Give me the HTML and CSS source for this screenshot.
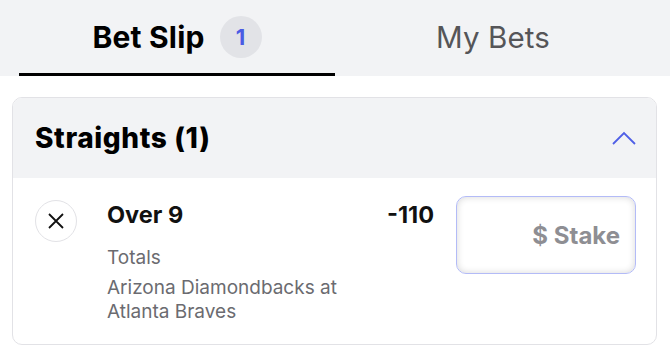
FILE: index.html
```html
<!DOCTYPE html>
<html>
<head>
<meta charset="utf-8">
<link rel="stylesheet" href="styles.css">
</head>
<body>
<div class="tabs">
  <div class="tab active"><span class="tab-label">Bet Slip</span><span class="badge">1</span></div>
  <div class="tab"><span class="tab-label">My Bets</span></div>
</div>
<div class="card">
  <div class="card-header">
    <span class="card-title">Straights (1)</span>
    <svg class="chevron" width="24" height="14" viewBox="0 0 24 14"><path d="M1 13 L12 2 L23 13" fill="none" stroke="#4f5fe6" stroke-width="1.8"/></svg>
  </div>
  <div class="bet-row">
    <div class="remove">
      <svg width="18" height="18" viewBox="0 0 18 18"><path d="M2 2 L16 16 M16 2 L2 16" stroke="#111" stroke-width="1.8" fill="none"/></svg>
    </div>
    <div class="info">
      <div class="selection">Over 9</div>
      <div class="market">Totals</div>
      <div class="event">Arizona Diamondbacks at<br>Atlanta Braves</div>
    </div>
    <div class="odds">-110</div>
    <div class="stake">$ Stake</div>
  </div>
</div>
</body>
</html>
```
FILE: styles.css
```css
* { box-sizing: border-box; }
body {
  margin: 0;
  background: #fff;
  font-family: Inter, "Noto Sans", sans-serif;
  color: #111;
}
.tabs {
  display: flex;
  padding: 0 19px;
  height: 76px;
  background: #f2f3f5;
}
.tab {
  flex: 1;
  display: flex;
  align-items: center;
  justify-content: center;
  gap: 15px;
  border-bottom: 3px solid transparent;
  padding-top: 1px;
}
.tab-label {
  font-size: 29.5px;
  color: #555558;
  letter-spacing: 0.1px;
}
.tab.active { border-bottom-color: #000; }
.tab.active .tab-label { font-weight: 700; color: #000; font-size: 30px; letter-spacing: 0.2px; }
.badge {
  width: 42px;
  height: 42px;
  border-radius: 50%;
  background: #e2e3e7;
  color: #4a5be4;
  font-size: 22px;
  font-weight: 700;
  display: flex;
  align-items: center;
  justify-content: center;
}
.card {
  margin: 21px 13px 0 12px;
  border: 1px solid #e2e2e6;
  border-radius: 10px;
  overflow: hidden;
}
.card-header {
  height: 80px;
  background: #f2f3f5;
  display: flex;
  align-items: center;
  justify-content: space-between;
  padding: 0 20px 0 22px;
}
.card-title {
  font-size: 28px;
  font-weight: 800;
  color: #000;
  letter-spacing: 0.6px;
}
.bet-row {
  display: flex;
  align-items: flex-start;
  padding: 18px 20px 20px 22px;
}
.remove {
  width: 42px;
  height: 42px;
  margin-top: 4px;
  border-radius: 50%;
  border: 1px solid #e2e2e6;
  display: flex;
  align-items: center;
  justify-content: center;
  flex: none;
}
.info {
  flex: 1;
  margin-left: 30px;
  margin-top: 5px;
}
.selection {
  font-size: 23.5px;
  line-height: 28px;
  font-weight: 700;
}
.market {
  margin-top: 17px;
  font-size: 19px;
  line-height: 24px;
  color: #6b6b70;
}
.event {
  margin-top: 6px;
  font-size: 19px;
  line-height: 24px;
  color: #6b6b70;
}
.odds {
  margin-top: 5px;
  font-size: 23.5px;
  line-height: 28px;
  font-weight: 700;
  margin-right: 22px;
}
.stake {
  width: 180px;
  height: 78px;
  border: 1px solid #b3bbf7;
  border-radius: 10px;
  box-shadow: inset 0 0 7px rgba(0,0,0,0.16);
  display: flex;
  align-items: center;
  justify-content: flex-end;
  padding-right: 15px;
  font-size: 24px;
  font-weight: 700;
  color: #8e8e93;
}
```
